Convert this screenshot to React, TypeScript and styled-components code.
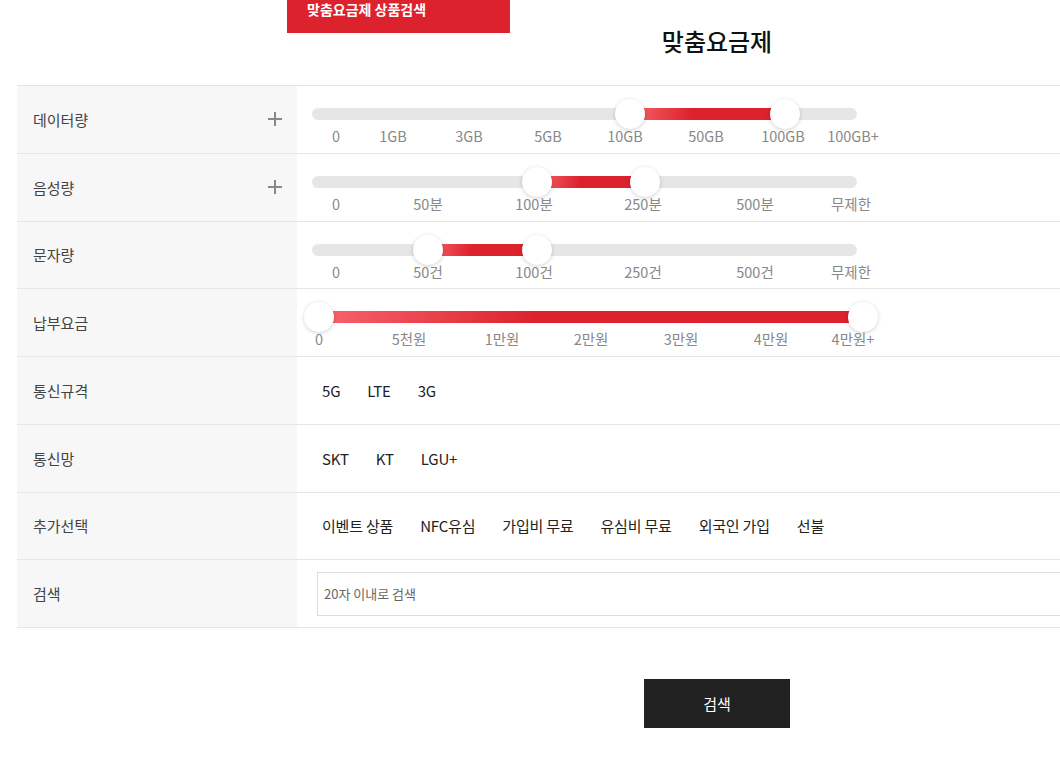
import styled, { createGlobalStyle } from "styled-components";

const GlobalStyle = createGlobalStyle`
  html, body {
    margin: 0;
    padding: 0;
    overflow: hidden;
    background: #fff;
  }
  body {
    font-family: "Noto Sans CJK KR", "Noto Sans", sans-serif;
  }
`;

type Tick = { text: string; x: number };
type SliderRowType = {
  label: string;
  plus: boolean;
  steps: number;
  from: number;
  to: number;
  ticks: Tick[];
};

// thumb centre range inside the track (px from track left)
const thumbStart = 7;
const thumbRange = 544;

const sliders: SliderRowType[] = [
  {
    label: "데이터량",
    plus: true,
    steps: 7,
    from: 4,
    to: 6,
    ticks: [
      { text: "0", x: 24 },
      { text: "1GB", x: 81 },
      { text: "3GB", x: 157 },
      { text: "5GB", x: 236 },
      { text: "10GB", x: 313 },
      { text: "50GB", x: 394 },
      { text: "100GB", x: 471 },
      { text: "100GB+", x: 541 },
    ],
  },
  {
    label: "음성량",
    plus: true,
    steps: 5,
    from: 2,
    to: 3,
    ticks: [
      { text: "0", x: 24 },
      { text: "50분", x: 116 },
      { text: "100분", x: 222 },
      { text: "250분", x: 331 },
      { text: "500분", x: 443 },
      { text: "무제한", x: 539 },
    ],
  },
  {
    label: "문자량",
    plus: false,
    steps: 5,
    from: 1,
    to: 2,
    ticks: [
      { text: "0", x: 24 },
      { text: "50건", x: 116 },
      { text: "100건", x: 222 },
      { text: "250건", x: 331 },
      { text: "500건", x: 443 },
      { text: "무제한", x: 539 },
    ],
  },
  {
    label: "납부요금",
    plus: false,
    steps: 6,
    from: 0,
    to: 6,
    ticks: [
      { text: "0", x: 7 },
      { text: "5천원", x: 97 },
      { text: "1만원", x: 190 },
      { text: "2만원", x: 279 },
      { text: "3만원", x: 369 },
      { text: "4만원", x: 459 },
      { text: "4만원+", x: 541 },
    ],
  },
];

const optionRows = [
  { label: "통신규격", items: ["5G", "LTE", "3G"] },
  { label: "통신망", items: ["SKT", "KT", "LGU+"] },
  {
    label: "추가선택",
    items: ["이벤트 상품", "NFC유심", "가입비 무료", "유심비 무료", "외국인 가입", "선불"],
  },
];

const Page = styled.div`
  position: relative;
  width: 1400px;
  margin-left: 17px;
`;

const TabBadge = styled.div`
  position: absolute;
  top: 0;
  left: 270px;
  width: 223px;
  height: 33px;
  box-sizing: border-box;
  padding: 0 20px;
  background: #dc222d;
  color: #fff;
  font-size: 14px;
  font-weight: 700;
  line-height: 19px;
`;

const Header = styled.div`
  height: 85px;
  box-sizing: border-box;
  padding-top: 25px;
  text-align: center;
`;

const Title = styled.h2`
  margin: 0;
  font-size: 24px;
  font-weight: 500;
  line-height: 32px;
  color: #111;
`;

const Table = styled.div`
  border-top: 1px solid #e5e5e5;
`;

const Row = styled.div`
  display: flex;
  height: 67.75px;
  box-sizing: border-box;
  border-bottom: 1px solid #e5e5e5;
`;

const LabelCell = styled.div`
  width: 280px;
  flex: none;
  box-sizing: border-box;
  padding: 0 15px 0 16px;
  background: #f7f7f7;
  display: flex;
  align-items: center;
  justify-content: space-between;
  font-size: 15px;
  color: #444;
`;

const ContentCell = styled.div<{ $pad: number }>`
  flex: 1;
  display: flex;
  align-items: center;
  padding-left: ${(p) => p.$pad}px;
`;

const SliderBox = styled.div`
  align-self: flex-start;
  margin-top: 22px;
  width: 545px;
`;

const Track = styled.div`
  position: relative;
  height: 12px;
  border-radius: 6px;
  background: #e6e6e6;
`;

const Fill = styled.div`
  position: absolute;
  top: 0;
  bottom: 0;
  background: linear-gradient(100deg, #f8646e 0%, #dc222d 40%, #dc222d 100%);
`;

const Thumb = styled.div`
  position: absolute;
  top: 50%;
  width: 30px;
  height: 30px;
  margin: -15px 0 0 -15px;
  border-radius: 50%;
  background: #fff;
  box-shadow: 0 1px 4px rgba(0, 0, 0, 0.18);
`;

const TickRow = styled.div`
  position: relative;
  height: 20px;
  margin-top: 6px;
`;

const TickLabel = styled.span`
  position: absolute;
  top: 0;
  transform: translateX(-50%);
  font-size: 14.5px;
  line-height: 20px;
  color: #888;
  white-space: nowrap;
`;

const OptionList = styled.div`
  display: flex;
  gap: 27px;
`;

const OptionItem = styled.span`
  font-size: 15px;
  color: #222;
  letter-spacing: -0.2px;
  cursor: pointer;
`;

const SearchInput = styled.input`
  flex: 1;
  margin-right: 20px;
  height: 44px;
  box-sizing: border-box;
  border: 1px solid #ddd;
  padding: 0 6px;
  font-family: "Noto Sans CJK KR", sans-serif;
  font-size: 13px;
  color: #333;
  outline: none;
  &::placeholder {
    color: #666;
  }
`;

const ButtonWrap = styled.div`
  display: flex;
  justify-content: center;
  margin-top: 51px;
`;

const SubmitButton = styled.button`
  width: 146px;
  height: 49px;
  border: 0;
  background: #222;
  color: #fff;
  font-family: "Noto Sans CJK KR", sans-serif;
  font-size: 15px;
  cursor: pointer;
`;

const PlusIcon = () => (
  <svg width="14" height="14" viewBox="0 0 14 14">
    <path d="M7 0v14M0 7h14" stroke="#888" strokeWidth="2" />
  </svg>
);

const thumbX = (v: number, steps: number) => thumbStart + (v / steps) * thumbRange;

const App = () => {
  return (
    <>
      <GlobalStyle />
      <Page>
        <TabBadge>맞춤요금제 상품검색</TabBadge>
        <Header>
          <Title>맞춤요금제</Title>
        </Header>
        <Table>
          {sliders.map((s) => {
            const a = thumbX(s.from, s.steps);
            const b = thumbX(s.to, s.steps);
            return (
              <Row key={s.label}>
                <LabelCell>
                  <span>{s.label}</span>
                  {s.plus && <PlusIcon />}
                </LabelCell>
                <ContentCell $pad={15}>
                  <SliderBox>
                    <Track>
                      <Fill style={{ left: a, width: b - a }} />
                      <Thumb style={{ left: a }} />
                      <Thumb style={{ left: b }} />
                    </Track>
                    <TickRow>
                      {s.ticks.map((t) => (
                        <TickLabel key={t.text} style={{ left: t.x }}>
                          {t.text}
                        </TickLabel>
                      ))}
                    </TickRow>
                  </SliderBox>
                </ContentCell>
              </Row>
            );
          })}
          {optionRows.map((r) => (
            <Row key={r.label}>
              <LabelCell>
                <span>{r.label}</span>
              </LabelCell>
              <ContentCell $pad={25}>
                <OptionList>
                  {r.items.map((it) => (
                    <OptionItem key={it}>{it}</OptionItem>
                  ))}
                </OptionList>
              </ContentCell>
            </Row>
          ))}
          <Row>
            <LabelCell>
              <span>검색</span>
            </LabelCell>
            <ContentCell $pad={20}>
              <SearchInput placeholder="20자 이내로 검색" />
            </ContentCell>
          </Row>
        </Table>
        <ButtonWrap>
          <SubmitButton>검색</SubmitButton>
        </ButtonWrap>
      </Page>
    </>
  );
};

export default App;
